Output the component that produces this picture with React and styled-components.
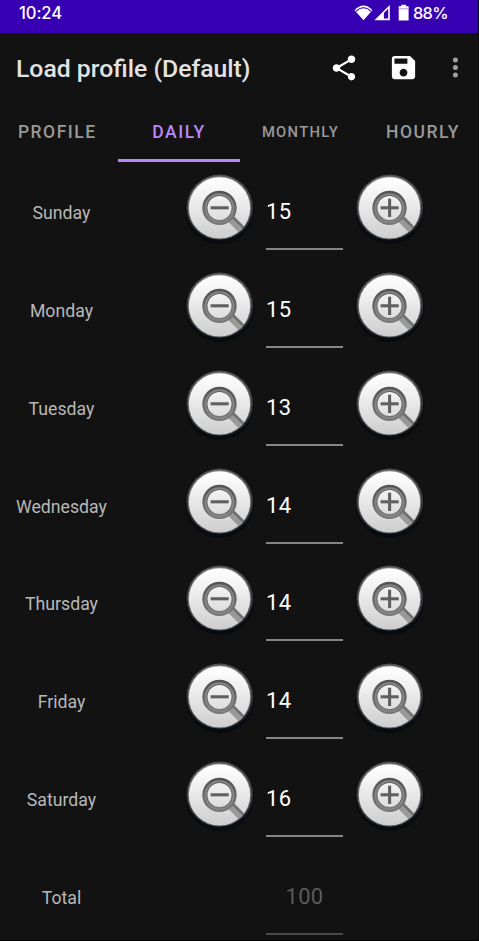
import React from "react";
import styled, { createGlobalStyle } from "styled-components";

const GlobalStyle = createGlobalStyle`
  * { box-sizing: border-box; }
  body { margin: 0; background: #121212; overflow: hidden; }
`;

const Screen = styled.div`
  width: 479px;
  height: 941px;
  overflow: hidden;
  display: flex;
  flex-direction: column;
  background: #121212;
  border-bottom: 1px solid #000;
  border-right: 1px solid #080808;
  font-family: Roboto, sans-serif;
`;

const StatusBar = styled.div`
  flex: none;
  height: 33px;
  padding: 0 30px 7px 19px;
  display: flex;
  align-items: center;
  background: #3700b3;
  color: #fff;
`;

const Clock = styled.span`
  flex: 1;
  font: 500 16.6px/26px Inter, sans-serif;
  letter-spacing: -0.1px;
`;

const Percent = styled.span`
  width: 35px;
  font: 500 16.4px/26px Inter, sans-serif;
  letter-spacing: -0.7px;
  white-space: nowrap;
`;

const StatusIcons = styled.svg`
  width: 56px;
  height: 20px;
  margin-right: 3px;
  display: block;
`;

const Toolbar = styled.header`
  flex: none;
  height: 70px;
  padding: 0 2px 1px 16px;
  display: flex;
  align-items: center;
`;

const Title = styled.h1`
  flex: 1;
  margin: 0;
  padding-top: 3px;
  color: #e2e2e2;
  font-size: 24.75px;
  font-weight: 500;
  line-height: 32px;
  white-space: nowrap;
`;

const Action = styled.button`
  width: ${(p) => p.$width}px;
  height: 48px;
  padding: 0;
  border: 0;
  background: none;
  color: ${(p) => p.$color || "#fff"};
  display: flex;
  align-items: center;
  justify-content: center;
  svg { display: block; flex: none; }
`;

const Tabs = styled.nav`
  flex: none;
  height: 59px;
  display: grid;
  grid-template-columns: 117.5px 122px 122px 122px;
`;

const Tab = styled.div`
  display: flex;
  align-items: center;
  justify-content: center;
  padding: 2px ${(p) => p.$right || 0}px 0 ${(p) => p.$left || 0}px;
  border-bottom: 3px solid ${(p) => (p.$active ? "#bb86fc" : "transparent")};
  color: ${(p) => (p.$active ? "#bb86fc" : "#999")};
  font-size: ${(p) => (p.$small ? 14.8 : 17.5)}px;
  font-weight: 500;
  letter-spacing: ${(p) => (p.$small ? 1.3 : 1.5)}px;
`;

const Rows = styled.main`
  flex: none;
`;

const Row = styled.div`
  height: 97.85px;
  padding-top: 6px;
  display: grid;
  grid-template-columns: 180px 80px 90px 80px;
`;

const Day = styled.div`
  width: 123px;
  padding-top: 32px;
  text-align: center;
  color: #b8b8b8;
  font-size: 17.7px;
  line-height: 26px;
`;

const Field = styled.div`
  grid-column: 3;
  width: 77px;
  height: 82px;
  margin-left: 6px;
  padding: 30px 0 0;
  border-bottom: 2px solid ${(p) => (p.$muted ? "#4a4a4a" : "#868686")};
  color: ${(p) => (p.$muted ? "#5b5b5b" : "#fff")};
  text-align: ${(p) => (p.$muted ? "center" : "left")};
  font-size: 22px;
  line-height: 28px;
  letter-spacing: 0.3px;
`;

const RoundButton = styled.button`
  width: 80px;
  height: 80px;
  padding: 0;
  border: 0;
  background: none;
  svg { display: block; }
`;

function Zoom({ plus }) {
  return (
    <RoundButton aria-label={plus ? "Increase" : "Decrease"}>
      <svg width="80" height="80" viewBox="0 0 80 80">
        <circle cx="39.7" cy="41.5" r="33.6" fill="#05070a" filter="url(#soft)" />
        <circle cx="39.7" cy="40" r="33.4" fill="url(#rim)" />
        <circle cx="39.5" cy="39.9" r="31.7" fill="url(#edge)" />
        <circle cx="39.5" cy="39.9" r="30.7" fill="url(#face)" />
        <g clipPath="url(#disc)">
          <path d="M49.5 49.5 L66 66" stroke="#999" strokeWidth="8" />
          <path d="M51.4 47.6 L68 64.2" stroke="#707070" strokeWidth="2.6" />
        </g>
        <circle cx="39.5" cy="39.9" r="14.6" fill="none" stroke="url(#lens)" strokeWidth="5.2" />
        <circle cx="39.5" cy="40.3" r="14" fill="none" stroke="#858585" strokeWidth="2" />
        <path d="M30.6 39.8H48.7" stroke="#606060" strokeWidth="3.1" />
        {plus && <path d="M39.6 30.7V49" stroke="#606060" strokeWidth="3.1" />}
      </svg>
    </RoundButton>
  );
}

const DefsHolder = styled.svg`
  display: block;
  width: 0;
  height: 0;
`;

const Defs = () => (
  <DefsHolder>
    <defs>
      <linearGradient id="face" x1="0" y1="0" x2="0" y2="1">
        <stop offset="0" stopColor="#fff" />
        <stop offset=".35" stopColor="#f0f0f0" />
        <stop offset="1" stopColor="#cdcdcd" />
      </linearGradient>
      <linearGradient id="rim" x1="0" y1="0" x2="0" y2="1">
        <stop offset="0" stopColor="#505050" />
        <stop offset=".5" stopColor="#36383b" />
        <stop offset="1" stopColor="#080a0f" />
      </linearGradient>
      <linearGradient id="edge" x1="0" y1="0" x2="0" y2="1">
        <stop offset="0" stopColor="#858585" />
        <stop offset="1" stopColor="#55585c" />
      </linearGradient>
      <linearGradient id="lens" x1="0" y1="0" x2="0" y2="1">
        <stop offset="0" stopColor="#555" />
        <stop offset="1" stopColor="#787878" />
      </linearGradient>
      <clipPath id="disc"><circle cx="39.5" cy="39.9" r="30.8" /></clipPath>
      <filter id="soft"><feGaussianBlur stdDeviation="1" /></filter>
    </defs>
  </DefsHolder>
);

const days = [
  ["Sunday", 15],
  ["Monday", 15],
  ["Tuesday", 13],
  ["Wednesday", 14],
  ["Thursday", 14],
  ["Friday", 14],
  ["Saturday", 16],
];

export default function App() {
  return (
    <Screen>
      <GlobalStyle />
      <StatusBar>
        <Clock>10:24</Clock>
        <StatusIcons viewBox="0 0 56 20" fill="#fff">
          <path d="M0.6 7.2C5.6 0.8 13.6 0.8 18.4 7.2L9.5 17.3Z" />
          <path d="M1.8 8.4C6.7 3.8 12.3 3.8 17.2 8.4" fill="none" stroke="#3700b3" strokeWidth="1.1" />
          <path d="M20.4 17.2L35.8 2V17.2ZM29.9 10V15.6H34.2V5.8Z" fillRule="evenodd" />
          <path d="M47.3 1.8H52V3.3H54.6V17.5H44.7V3.3H47.3Z" />
          <path d="M45 5.8H54.3" stroke="#8c68d0" strokeWidth=".7" />
        </StatusIcons>
        <Percent>88%</Percent>
      </StatusBar>
      <Toolbar>
        <Title>Load profile (Default)</Title>
        <Action $width={60} aria-label="Share">
          <svg width="30" height="30" viewBox="0 0 24 24" fill="currentColor">
            <path d="M18 16.08c-.76 0-1.44.3-1.96.77L8.91 12.7c.05-.23.09-.46.09-.7s-.04-.47-.09-.7l7.05-4.11c.54.5 1.25.81 2.04.81 1.66 0 3-1.34 3-3s-1.34-3-3-3-3 1.34-3 3c0 .24.04.47.09.7L8.04 9.81C7.5 9.31 6.79 9 6 9c-1.66 0-3 1.34-3 3s1.34 3 3 3c.79 0 1.5-.31 2.04-.81l7.12 4.16c-.05.21-.08.43-.08.65 0 1.61 1.31 2.92 2.92 2.92s2.92-1.31 2.92-2.92-1.31-2.92-2.92-2.92z" />
          </svg>
        </Action>
        <Action $width={59} aria-label="Save">
          <svg width="31" height="31" viewBox="0 0 24 24" fill="currentColor">
            <path d="M17 3H5c-1.11 0-2 .9-2 2v14c0 1.1.89 2 2 2h14c1.1 0 2-.9 2-2V7l-4-4zm-5 16c-1.66 0-3-1.34-3-3s1.34-3 3-3 3 1.34 3 3-1.34 3-3 3zm3-10H5V5h10v4z" />
          </svg>
        </Action>
        <Action $width={43} $color="#a0a0a0" aria-label="More options">
          <svg width="6" height="24" viewBox="0 0 6 24" fill="currentColor">
            <circle cx="3.4" cy="4" r="2.5" />
            <circle cx="3.4" cy="11.5" r="2.5" />
            <circle cx="3.4" cy="19" r="2.5" />
          </svg>
        </Action>
      </Toolbar>
      <Tabs>
        <Tab $right={3}>PROFILE</Tab>
        <Tab $active $left={1}>DAILY</Tab>
        <Tab $small>MONTHLY</Tab>
        <Tab $left={1}>HOURLY</Tab>
      </Tabs>
      <Defs />
      <Rows>
        {days.map(([name, value]) => (
          <Row key={name}>
            <Day>{name}</Day>
            <Zoom />
            <Field>{value}</Field>
            <Zoom plus />
          </Row>
        ))}
        <Row>
          <Day>Total</Day>
          <Field $muted>100</Field>
        </Row>
      </Rows>
    </Screen>
  );
}
